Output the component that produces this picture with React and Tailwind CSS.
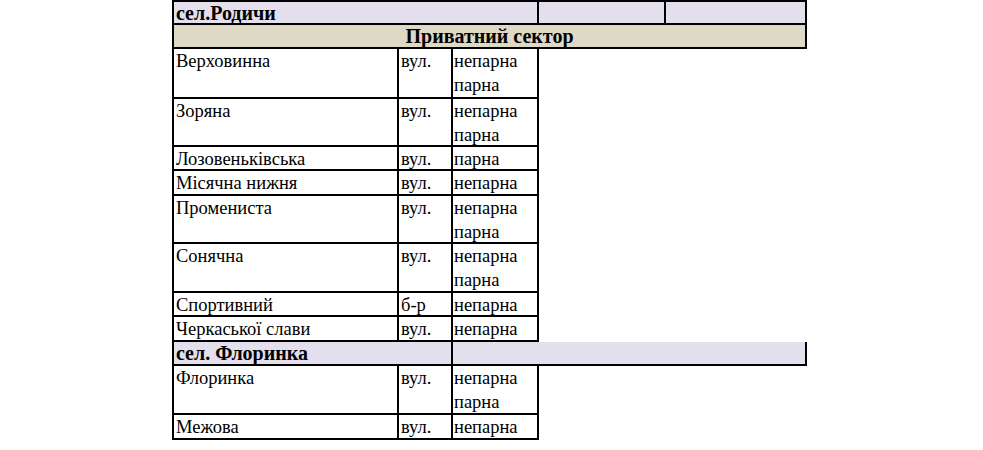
import React from "react";

const upper = [
  { name: ["Верховинна"], kind: ["вул."], side: ["непарна", "парна"], h: "h-[50px]" },
  { name: ["Зоряна"], kind: ["вул."], side: ["непарна", "парна"], h: "h-[48px]" },
  { name: ["Лозовеньківська"], kind: ["вул."], side: ["парна"], h: "h-[24px]" },
  { name: ["Місячна нижня"], kind: ["вул."], side: ["непарна"], h: "h-[25px]" },
  { name: ["Промениста"], kind: ["вул."], side: ["непарна", "парна"], h: "h-[48px]" },
  { name: ["Сонячна"], kind: ["вул."], side: ["непарна", "парна"], h: "h-[49px]" },
  { name: ["Спортивний"], kind: ["б-р"], side: ["непарна"], h: "h-[24px]" },
  { name: ["Черкаської слави"], kind: ["вул."], side: ["непарна"], h: "h-[25px]" },
];

const lower = [
  { name: ["Флоринка"], kind: ["вул."], side: ["непарна", "парна"], h: "h-[49px]" },
  { name: ["Межова"], kind: ["вул."], side: ["непарна"], h: "h-[25px]" },
];

function Lines({ items }) {
  return items.map((t, i) => (
    <div key={i} className="leading-[24px] whitespace-nowrap">
      {t}
    </div>
  ));
}

function StreetRow({ row }) {
  return (
    <div className={`flex ${row.h}`}>
      <div className="flex border-b-2 border-black">
        <div className="w-[227px] border-l-2 border-r-2 border-black pl-[2px]">
          <Lines items={row.name} />
        </div>
        <div className="w-[54px] border-r-2 border-black pl-[2px]">
          <Lines items={row.kind} />
        </div>
        <div className="w-[86px] border-r-2 border-black pl-[1px]">
          <Lines items={row.side} />
        </div>
      </div>
    </div>
  );
}

export default function App() {
  return (
    <div
      className="w-[983px] h-[450px] bg-white text-black text-[18.5px] overflow-hidden"
      style={{ fontFamily: '"Liberation Serif", "Times New Roman", serif' }}
    >
      <div className="ml-[172px] w-[635px] flex flex-col">
        <div className="flex h-[25px] border-t-2 border-b-2 border-black bg-[#e4dfec] font-bold">
          <div className="w-[367px] border-l-2 border-r-2 border-black pl-[2px] leading-[22px] text-[20px]">
            сел.Родичи
          </div>
          <div className="w-[127px] border-r-2 border-black"></div>
          <div className="w-[141px] border-r-2 border-black"></div>
        </div>
        <div className="h-[24px] border-l-2 border-r-2 border-b-2 border-black bg-[#ddd9c4] text-center font-bold text-[20px] leading-[22px]">
          Приватний сектор
        </div>
        {upper.map((r, i) => (
          <StreetRow key={i} row={r} />
        ))}
        <div className="flex h-[24px] border-b-2 border-black bg-[#e4dfec] font-bold">
          <div className="w-[281px] border-l-2 border-r-2 border-black pl-[2px] leading-[22px] text-[20px]">
            сел. Флоринка
          </div>
          <div className="w-[354px] border-r-2 border-black"></div>
        </div>
        {lower.map((r, i) => (
          <StreetRow key={i} row={r} />
        ))}
      </div>
    </div>
  );
}
